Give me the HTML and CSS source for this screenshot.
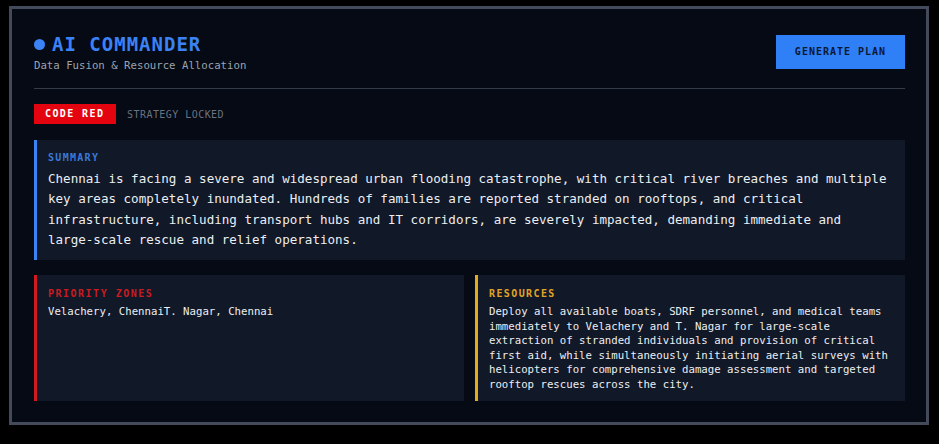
FILE: index.html
```html
<!DOCTYPE html>
<html lang="en">
<head>
<meta charset="utf-8">
<title>AI Commander</title>
<link rel="stylesheet" href="styles.css">
</head>
<body>
<div class="panel">
  <header class="header">
    <div class="brand">
      <h1 class="title"><span class="dot"></span>AI COMMANDER</h1>
      <p class="subtitle">Data Fusion &amp; Resource Allocation</p>
    </div>
    <button class="btn">GENERATE PLAN</button>
  </header>
  <div class="status">
    <span class="badge">CODE RED</span>
    <span class="locked">STRATEGY LOCKED</span>
  </div>
  <section class="card card-blue">
    <div class="label label-blue">SUMMARY</div>
    <p class="summary-text">Chennai is facing a severe and widespread urban flooding catastrophe, with critical river breaches and multiple key areas completely inundated. Hundreds of families are reported stranded on rooftops, and critical infrastructure, including transport hubs and IT corridors, are severely impacted, demanding immediate and large-scale rescue and relief operations.</p>
  </section>
  <div class="grid">
    <section class="card card-red">
      <div class="label label-red">PRIORITY ZONES</div>
      <p class="small-text">Velachery, ChennaiT. Nagar, Chennai</p>
    </section>
    <section class="card card-amber">
      <div class="label label-amber">RESOURCES</div>
      <p class="small-text">Deploy all available boats, SDRF personnel, and medical teams immediately to Velachery and T. Nagar for large-scale extraction of stranded individuals and provision of critical first aid, while simultaneously initiating aerial surveys with helicopters for comprehensive damage assessment and targeted rooftop rescues across the city.</p>
    </section>
  </div>
</div>
</body>
</html>
```
FILE: styles.css
```css
* { box-sizing: border-box; }
html, body { margin: 0; padding: 0; }
body {
  background: #000;
  font-family: "DejaVu Sans Mono", "Liberation Mono", monospace;
  color: #e5e7eb;
  width: 939px;
  height: 444px;
  padding: 6px 10px 0 9px;
}
.panel {
  width: 920px;
  height: 419px;
  background: #050a14;
  border: 3px solid #434b5a;
  padding: 23px 21px 21px 22px;
  display: flex;
  flex-direction: column;
}
.header {
  display: flex;
  justify-content: space-between;
  align-items: center;
  padding-bottom: 15px;
  border-bottom: 1px solid #343c4a;
}
.brand { display: flex; flex-direction: column; }
.title {
  margin: 0;
  display: flex;
  align-items: center;
  font-size: 19px;
  line-height: 24px;
  font-weight: bold;
  letter-spacing: 1px;
  color: #3b82f6;
}
.dot {
  width: 11px;
  height: 11px;
  border-radius: 50%;
  background: #3b82f6;
  margin-right: 7px;
  flex: none;
}
.subtitle {
  margin: 3px 0 0;
  font-size: 10.7px;
  line-height: 14px;
  color: #9ca3af;
}
.btn {
  font-family: inherit;
  background: #2f80f7;
  color: #0b1834;
  border: none;
  height: 34px;
  width: 129px;
  padding: 0;
  font-size: 10px;
  font-weight: bold;
  letter-spacing: 1px;
  margin-bottom: 2px;
}
.status {
  display: flex;
  align-items: center;
  margin-top: 15px;
  gap: 11px;
}
.badge {
  background: #e3040f;
  color: #fff;
  font-size: 10px;
  font-weight: bold;
  letter-spacing: 1.4px;
  height: 20px;
  line-height: 20px;
  padding: 0 11px 0 11px;
  width: 82px;
}
.locked {
  font-size: 10px;
  letter-spacing: 0.45px;
  color: #6b7280;
}
.card {
  background: #111827;
  border-left: 3px solid #3b82f6;
  padding: 11px 11px 11px 11px;
}
.card-blue { margin-top: 16px; padding-bottom: 10px; }
.card-red { border-left-color: #d01a1f; }
.card-amber { border-left-color: #e5a91a; }
.label {
  font-size: 10px;
  line-height: 14px;
  font-weight: bold;
  letter-spacing: 1.3px;
}
.label-blue { color: #3b78d8; }
.label-red { color: #c81c22; letter-spacing: 1.5px; }
.label-amber { color: #e0a526; letter-spacing: 1.4px; }
.summary-text {
  margin: 4px 0 0;
  font-size: 12.55px;
  line-height: 20.3px;
  color: #eceef2;
}
.grid {
  margin-top: 15px;
  display: grid;
  grid-template-columns: 1fr 1fr;
  gap: 11px;
}
.grid .card { padding-top: 12px; padding-bottom: 9px; }
.small-text {
  margin: 4px 0 0;
  font-size: 10.7px;
  line-height: 14.5px;
  color: #eceef2;
}
```
